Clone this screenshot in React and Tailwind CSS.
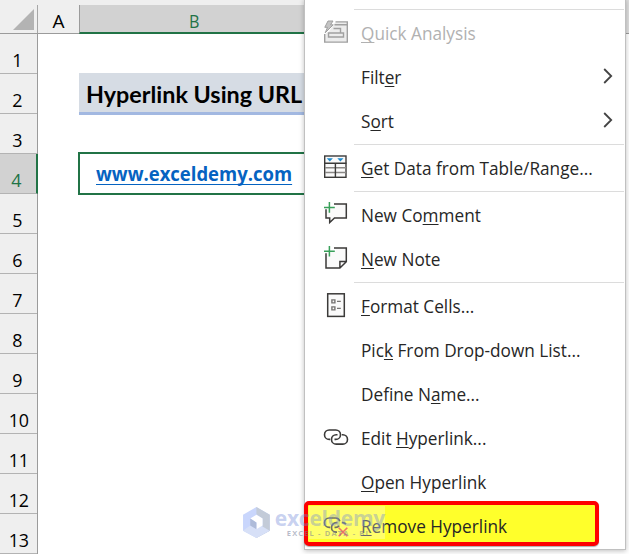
import React from 'react';
import clsx from 'clsx';

const rows = [1, 2, 3, 4, 5, 6, 7, 8, 9, 10, 11, 12, 13];

const QuickIcon = () => (
  <svg viewBox="0 0 28 28" className="w-7 h-7" fill="none" stroke="#a0a0a0" strokeWidth="1.4">
    <path d="M14 1.9H25.3V22.1H2.7V14.5L7 11.5L12 4Z" fill="#ececec" stroke="none" />
    <path d="M13.5 1.9H25.3V22.1H2.7V14M12.5 4.7H25" />
    <path d="M11.5 8.5H18.5V12.5M6.5 13H21.5V17H6.5Z" />
    <path d="M6 1H11L8.5 4.8H11.2L3.2 12.8L5.5 7.3H2.8Z" fill="#c4c4c4" strokeWidth="1" />
  </svg>
);

const TableIcon = () => (
  <svg viewBox="0 0 28 28" className="w-7 h-7" fill="none" stroke="#3b3a39" strokeWidth="1.4">
    <rect x="2.7" y="1" width="21.3" height="21.3" fill="#fafafa" />
    <path d="M3 12.7H24M3 17.5H24" stroke="#8a8886" />
    <path d="M2.5 8.2H24.5M13.4 8V22" />
    <path d="M4.7 3.2H10.9L7.8 6.4ZM15.3 3.2H21.5L18.4 6.4Z" fill="#1e8bcd" stroke="none" />
  </svg>
);

const CommentIcon = () => (
  <svg viewBox="0 0 28 28" className="w-7 h-7" fill="none" stroke="#3b3a39" strokeWidth="1.5">
    <path d="M14 2H24.3V16H12.5L7.7 20.6V16H4V7.3L14 5Z" fill="#fafafa" stroke="none" />
    <path d="M12 2H24.3V16H12.5L7.7 20.6V16H4V7.3" />
    <path d="M7.4 0V10.8M2 5.4H12.8" stroke="#39a05a" />
  </svg>
);

const NoteIcon = () => (
  <svg viewBox="0 0 28 28" className="w-7 h-7" fill="none" stroke="#3b3a39" strokeWidth="1.5">
    <path d="M14 2H24.3V15.5L17.8 22H4V7.3L14 5Z" fill="#fafafa" stroke="none" />
    <path d="M12 2H24.3V15.7L17.9 22H4V7.3M17.9 22V15.6H24.3" />
    <path d="M7.4 0V10.6M2 5.3H12.8" stroke="#39a05a" />
  </svg>
);

const FormatIcon = () => (
  <svg viewBox="0 0 28 28" className="w-7 h-7" fill="none" stroke="#3b3a39" strokeWidth="1.5">
    <rect x="5.7" y="0.8" width="16.6" height="22.6" fill="#fafafa" />
    <path d="M9.9 6.9h3v3h-3zM9.9 13.9h3v3h-3zM15 8.4h3.8M15 15.4h3.8" stroke="#767472" strokeWidth="1.4" />
  </svg>
);

const LinkIcon = () => (
  <svg viewBox="0 0 28 28" className="w-7 h-7" fill="none" stroke="#3b3a39" strokeWidth="1.6">
    <path d="M8.2 14.4H7.2a4.7 4.7 0 0 1 0-9.4h6.6a4.7 4.7 0 0 1 0 9.4h-1.3" />
    <path d="M19.8 9.7h1a4.7 4.7 0 0 1 0 9.4h-6.6a4.7 4.7 0 0 1 0-9.4h1.3" />
  </svg>
);

const UnlinkIcon = () => (
  <svg viewBox="0 0 28 28" className="w-7 h-7" fill="none" stroke="#32321f" strokeWidth="1.7">
    <path d="M8.2 14.4H7.2a4.7 4.7 0 0 1 0-9.4h6.6a4.7 4.7 0 0 1 4 3.2" />
    <path d="M15 19.1h-0.8a4.7 4.7 0 0 1 0-9.4h1.3M19.8 9.7h1a4.7 4.7 0 0 1 3.2 1.6M12.5 14.4h1.3a4.7 4.7 0 0 0 3.4-1.6" />
    <path d="M16.7 14.7L25.3 23.3M25.3 14.7L16.7 23.3" stroke="#e2362a" strokeWidth="1.6" />
  </svg>
);

// "_" goes before the access key letter
const menu = [
  { sep: true },
  { label: '_Quick Analysis', icon: QuickIcon, disabled: true },
  { label: 'Filt_er', arrow: true },
  { label: 'S_ort', arrow: true },
  { sep: true },
  { label: '_Get Data from Table/Range...', icon: TableIcon },
  { sep: true },
  { label: 'New Co_mment', icon: CommentIcon },
  { label: '_New Note', icon: NoteIcon },
  { sep: true },
  { label: '_Format Cells...', icon: FormatIcon },
  { label: 'Pic_k From Drop-down List...' },
  { label: 'Define N_ame...' },
  { label: 'Edit _Hyperlink...', icon: LinkIcon },
  { label: '_Open Hyperlink' },
  { label: '_Remove Hyperlink', icon: UnlinkIcon, marked: true },
];

const Label = ({ text }) => {
  const [before, rest] = text.split('_');
  return (
    <span className="origin-left scale-x-[0.93] whitespace-nowrap">
      {before}
      <span className="underline decoration-1 underline-offset-2 [text-decoration-skip-ink:none]">{rest[0]}</span>
      {rest.slice(1)}
    </span>
  );
};

const MenuItem = ({ item }) => {
  if (item.sep) return <div className="h-[3px] ml-[49px] mr-px border-t border-[#dcdcdc]" />;
  const Icon = item.icon;
  return (
    <div className={clsx("relative h-11 flex items-center font-['Open_Sans'] text-[18.5px]", item.disabled ? 'text-[#b1b1b1]' : 'text-[#262626]')}>
      {item.marked && (
        <div className="absolute -left-px -top-1 w-[295px] h-[45px] rounded-[5px] border-4 border-[#fe0000] bg-[#ffff2b] shadow-[0_1px_1px_#77777799]" />
      )}
      <div className="relative w-7 h-7 ml-[17px] mr-[11px]">{Icon && <Icon />}</div>
      <div className="relative flex-1 flex items-center -mt-0.5"><Label text={item.label} /></div>
      {item.arrow && (
        <svg viewBox="0 0 10 16" className="w-2.5 h-4 mr-[12px] -mt-[5px]" fill="none" stroke="#444" strokeWidth="1.8">
          <path d="M1.2 1L8.2 8L1.2 15" />
        </svg>
      )}
    </div>
  );
};

const Watermark = () => (
  <div className="absolute left-[242px] top-[506px] flex w-[143px] h-[33px]">
    <div className="absolute left-[67px] top-0 w-[76px] h-[33px] bg-white/30" />
    <svg viewBox="0 0 28 32" preserveAspectRatio="none" className="relative w-[29px] h-[33px]">
      <path d="M14 1L27 8.5V24L14 31L1 24V8.5Z" fill="#c9d6fc" />
      <path d="M14 1L27 8.5V24L14 31V25L20 20V12L14 8Z" fill="#c3cbd8" />
      <path d="M14 31L27 24L19 19.5L14 22L8 19L1 24Z" fill="#d7e0f7" />
      <path d="M8 12L14 8.5L20 12V19L14 22.5V16Z" fill="#fff" />
      <path d="M8 12L14 16V22.5L8 19Z" fill="#aebbd9" />
    </svg>
    <div className="relative ml-1 font-['Open_Sans']">
      <div className="mt-[3px] text-[21px] leading-[18px] font-bold tracking-[-0.25px] text-[#7189d8]/40">exceldemy</div>
      <div className="ml-3 mt-[2px] text-[7.5px] leading-[8px] font-bold tracking-[1.15px] whitespace-nowrap text-[#717a94]/50">EXCEL - DATA - BI</div>
    </div>
  </div>
);

export default function App() {
  return (
    <div className="relative w-[629px] h-[554px] overflow-hidden bg-white font-['Open_Sans',sans-serif] text-black">
      {/* Column headers */}
      <div className="flex h-[34px] pt-[5px] bg-[#efefef] border-b border-[#9b9b9b]">
        <div className="w-[38px] flex justify-end pr-[3px] pt-1 border-r border-[#a6a6a6]">
          <svg viewBox="0 0 21 21" className="w-[21px] h-[21px]"><path d="M21 0V21H0Z" fill="#b3b3b3" /></svg>
        </div>
        <div className="w-[41px] h-[28px] flex justify-center pt-[3px] text-[19px] leading-[27px]">A</div>
        <div className="w-[231px] h-[29px] flex justify-center pt-[3px] pr-0.5 bg-[#d2d2d2] border-l border-[#9b9b9b] border-b-2 border-b-[#217346] text-[19px] leading-[27px] text-[#217346]">
          <span className="scale-x-[0.85]">B</span>
        </div>
      </div>

      <div className="flex">
        {/* Row numbers */}
        <div className="w-[38px] h-[520px] bg-[#efefef] border-r border-[#9b9b9b]">
          {rows.map((n) => (
            <div
              key={n}
              className={clsx(
                'flex justify-center h-10 pt-[13px] text-[19px] leading-[27px] border-b border-[#b3b3b3]',
                n < 10 ? 'pr-[3px]' : 'pr-0',
                n === 4 && 'bg-[#d2d2d2] text-[#217346] -mr-px border-r-2 border-r-[#217346]'
              )}
            >
              <span className="scale-x-[0.94]">{n}</span>
            </div>
          ))}
        </div>

        {/* Cells */}
        <div className="pt-[39px] pl-[41px] w-[300px]">
          <div className="h-[42px] w-[240px] bg-[#d6dce4] border-b-[3px] border-[#a2b8e1] pl-[7px] font-['Lato'] font-bold text-[23px] leading-[43px] whitespace-nowrap">
            <span className="inline-block origin-left scale-x-[1.015]">Hyperlink Using URL</span>
          </div>
          <div className="mt-[37px] -ml-px h-[43px] w-[240px] border-2 border-[#217346] pl-4 font-['Open_Sans'] font-bold text-[19px] leading-[41px] text-[#0563c1] whitespace-nowrap">
            <span className="inline-block origin-left scale-x-[0.973] underline decoration-1 underline-offset-[3px] [text-decoration-skip-ink:none]">www.exceldemy.com</span>
          </div>
        </div>
      </div>

      {/* Sheet strip visible to the right of the menu */}
      <div className="absolute right-0 top-0 w-[3px] h-[34px] bg-[#dedede] border-b border-[#9b9b9b]" />

      {/* Context menu */}
      <div className="absolute left-[304px] top-[-1px] w-[322px] h-[551px] pt-[9px] bg-white border border-[#c0c0c0] shadow-[0_1px_5px_#00000040]">
        {menu.map((item, i) => (
          <MenuItem key={i} item={item} />
        ))}
      </div>

      <Watermark />
    </div>
  );
}
